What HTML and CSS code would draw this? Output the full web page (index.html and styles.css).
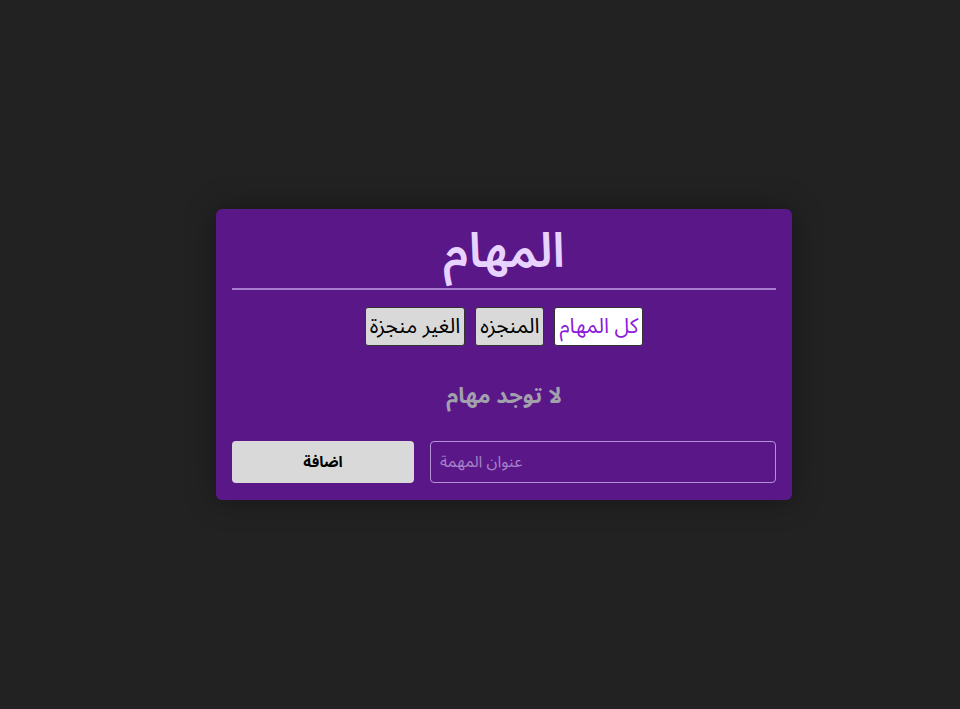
FILE: index.html
```html
<!DOCTYPE html>
<html lang="ar" dir="rtl">
<head>
<meta charset="utf-8">
<title>المهام</title>
<link rel="stylesheet" href="styles.css">
</head>
<body>
<div class="page">
  <div class="card">
    <h1 class="title">المهام</h1>
    <hr class="divider">
    <div class="filters">
      <button class="filter active">كل المهام</button>
      <button class="filter">المنجزه</button>
      <button class="filter">الغير منجزة</button>
    </div>
    <p class="empty">لا توجد مهام</p>
    <div class="add-row">
      <input class="task-input" type="text" placeholder="عنوان المهمة">
      <button class="add-btn">اضافة</button>
    </div>
  </div>
</div>
</body>
</html>
```
FILE: styles.css
```css
html, body {
  margin: 0;
  padding: 0;
  background: #222222;
  height: 100%;
}
body {
  font-family: "Noto Sans Arabic", "Noto Sans Arabic UI", "Noto Naskh Arabic", "Noto Sans", "DejaVu Sans", sans-serif;
}
.page {
  height: 100%;
  display: flex;
  align-items: center;
  justify-content: center;
  padding-left: 48px;
  box-sizing: border-box;
}
.card {
  width: 576px;
  box-sizing: border-box;
  background: #5a1788;
  border-radius: 6px;
  padding: 16px 16px 17px;
  box-shadow: 0 0 30px rgba(0, 0, 0, 0.35);
  display: flex;
  flex-direction: column;
}
.title {
  margin: 0;
  padding-bottom: 10px;
  text-align: center;
  color: #e8d2ff;
  font-size: 48px;
  line-height: 53px;
  font-weight: 600;
}
.divider {
  margin: 0;
  border: none;
  height: 2px;
  background: #a87dcd;
}
.filters {
  display: flex;
  justify-content: center;
  gap: 10px;
  margin-top: 17px;
}
.filter {
  font-family: inherit;
  font-size: 21px;
  line-height: 27px;
  padding: 5px 4px;
  background: #d9d9d9;
  color: #000;
  border: 1px solid #333;
  border-radius: 3px;
}
.filter.active {
  background: #ffffff;
  color: #8a1cd9;
}
.empty {
  margin: 30px 0 0;
  text-align: center;
  color: #a3a0ad;
  font-size: 22px;
  font-weight: 700;
  line-height: 40px;
}
.add-row {
  display: flex;
  gap: 16px;
  margin-top: 25px;
}
.task-input {
  flex: 1;
  min-width: 0;
  height: 42px;
  box-sizing: border-box;
  background: transparent;
  border: 1px solid #b592d6;
  border-radius: 4px;
  padding: 0 9px;
  color: #fff;
  font-family: inherit;
  font-size: 16px;
  text-align: left;
}
.task-input::placeholder {
  color: #a582c7;
}
.add-btn {
  flex: 0 0 182px;
  height: 42px;
  background: #d9d9d9;
  border: none;
  border-radius: 4px;
  font-family: inherit;
  font-size: 15px;
  font-weight: 700;
  color: #000;
}
```
